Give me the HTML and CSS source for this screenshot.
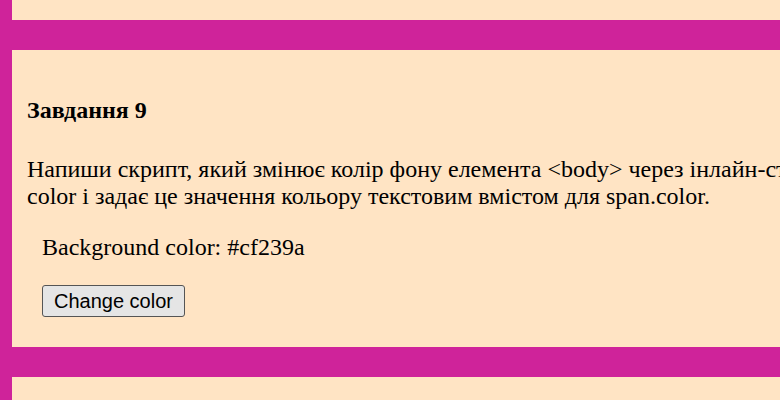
FILE: index.html
```html
<!DOCTYPE html>
<html lang="uk">
<head>
<meta charset="utf-8">
<title>Завдання 9</title>
<link rel="stylesheet" href="styles.css">
</head>
<body>
<section class="task task-previous"></section>
<section class="task">
<h2 class="task-title">Завдання 9</h2>
<p class="task-text">Напиши скрипт, який змінює колір фону елемента &lt;body&gt; через інлайн-стиль<br>color і задає це значення кольору текстовим вмістом для span.color.</p>
<div class="widget">
<p class="widget-text">Background color: <span class="color">#cf239a</span></p>
<button type="button" class="change-color">Change color</button>
</div>
</section>
<section class="task task-next"></section>
</body>
</html>
```
FILE: styles.css
```css
* {
  box-sizing: border-box;
}

body {
  margin: 0;
  padding-left: 12px;
  display: flex;
  flex-direction: column;
  gap: 30px;
  background-color: #cf239a;
  color: #000;
  font-family: "Liberation Serif", "Times New Roman", serif;
  font-size: 24px;
  line-height: 27px;
  overflow: hidden;
}

.task {
  padding: 47px 0 30px 15px;
  background-color: #ffe4c4;
}

.task-previous {
  padding: 20px 0 0;
}

.task-next {
  padding: 24px 0 0;
}

.task-title {
  margin: 0 0 32px;
  font-size: 24px;
}

.task-text {
  margin: 0;
  white-space: nowrap;
}

.widget {
  padding: 24px 15px 0;
}

.widget-text {
  margin: 0 0 24px;
}

.change-color {
  display: block;
  height: 32px;
  padding: 0 11px;
  border: 1px solid #555;
  border-radius: 3px;
  background-color: #e5e5e5;
  color: #000;
  font-family: "Liberation Sans", Arial, sans-serif;
  font-size: 20px;
}
```
